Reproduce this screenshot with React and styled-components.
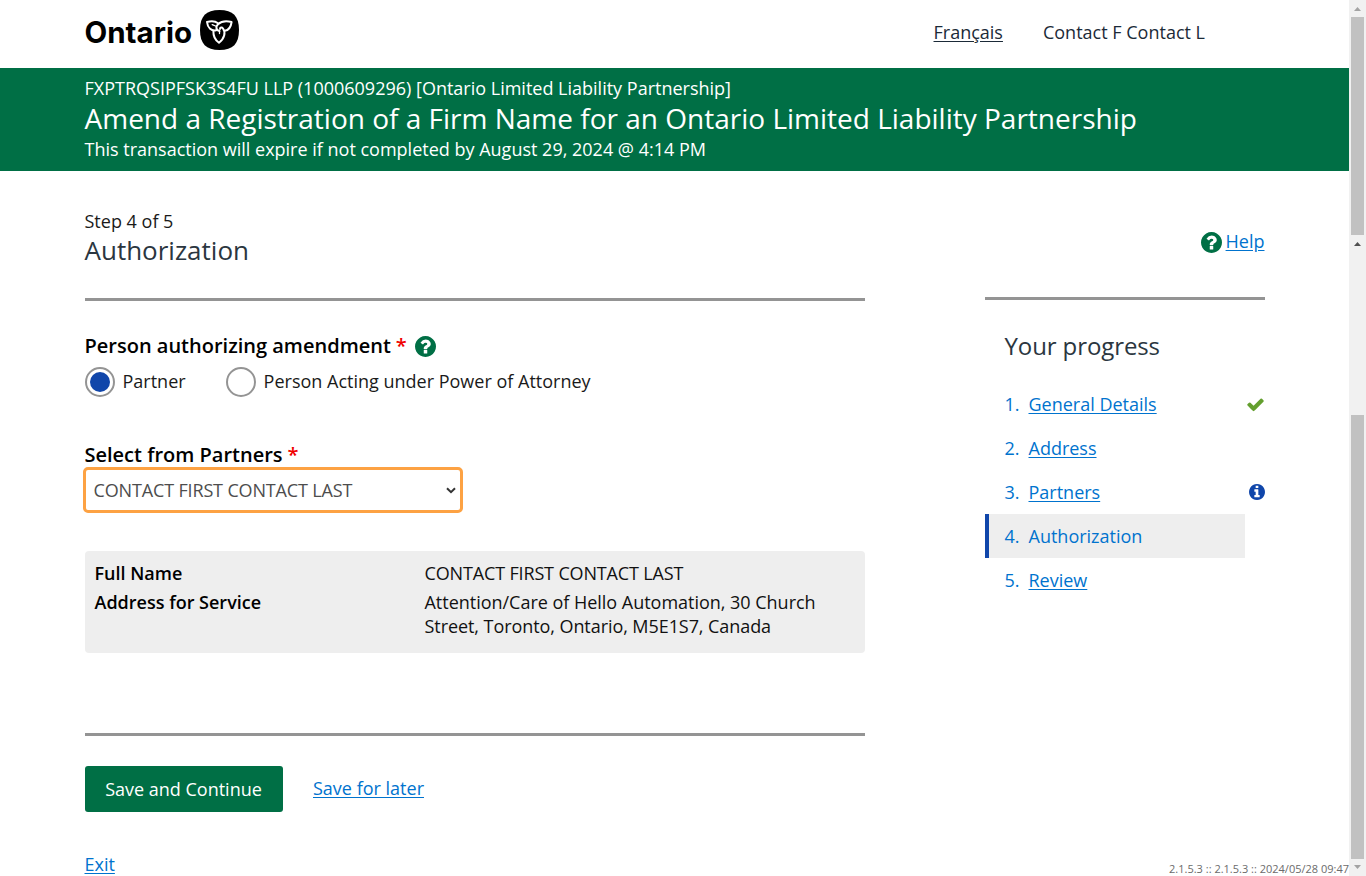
import React from 'react';
import styled, { createGlobalStyle } from 'styled-components';

const GlobalStyle = createGlobalStyle`
  *, *::before, *::after { box-sizing: border-box; }
  body {
    margin: 0;
    overflow: hidden;
    background: #fff;
    color: #1a1a1a;
    font-family: 'Open Sans', 'Noto Sans', sans-serif;
    font-size: 18px;
    line-height: 24px;
  }
  h1, h2, p, ol, dl, dd, dt, fieldset { margin: 0; padding: 0; border: 0; font-weight: 400; }
`;

const Shell = styled.div`
  display: flex;
  width: 1366px;
  height: 876px;
  overflow: hidden;
`;

const Page = styled.div`
  position: relative;
  flex: 1;
  min-width: 0;
`;

const Header = styled.header`
  display: flex;
  align-items: flex-start;
  justify-content: space-between;
  height: 68px;
  padding: 0 144px 0 84.5px;
`;

const Brand = styled.div`
  display: flex;
  align-items: center;
  gap: 7px;
  padding-top: 10px;
  color: #000;
  svg { display: block; }
`;

const BrandName = styled.span`
  width: 108px;
  padding-top: 4px;
  font: 700 29.5px/36px Inter, sans-serif;
  white-space: nowrap;
`;

const HeaderLinks = styled.nav`
  display: flex;
  gap: 40px;
  padding-top: 20px;
  color: #1b2a38;
  a { color: inherit; text-underline-offset: 2px; }
`;

const Banner = styled.section`
  height: 103px;
  padding: 8px 84.5px 0;
  background: #006f45;
  color: #fff;
  white-space: nowrap;
  p { line-height: 24px; font-size: 18px; }
`;

const BannerTitle = styled.h1`
  font-size: 28px;
  line-height: 37px;
`;

const Columns = styled.div`
  display: flex;
  gap: 120px;
  padding-left: 84.5px;
`;

const Main = styled.main`
  width: 780px;
  padding-top: 38px;
`;

const Rule = styled.div`
  height: 3px;
  background: #949494;
`;

const StepHeading = styled.div`
  height: 89px;
  h2 { font-size: 26px; line-height: 34px; color: #2b3640; }
`;

const Label = styled.div`
  display: flex;
  align-items: center;
  height: 28px;
  font-size: 20px;
  font-weight: 600;
  color: #000;
  svg { margin-left: 8px; }
`;

const Required = styled.span`
  margin-left: 5px;
  color: #f00000;
`;

const RadioField = styled.fieldset`
  margin-top: 31px;
`;

const RadioRow = styled.div`
  display: flex;
  gap: 40px;
  margin-top: 7px;
`;

const Radio = styled.label`
  display: flex;
  align-items: flex-start;
  gap: 8px;
  height: 30px;
`;

const RadioText = styled.span`
  padding-top: 2px;
`;

const RadioMark = styled.span`
  display: grid;
  place-items: center;
  width: 30px;
  height: 30px;
  border: 2px solid #949494;
  border-radius: 50%;
  &::after {
    content: '';
    width: 20px;
    height: 20px;
    border-radius: 50%;
    background: ${({ $checked }) => ($checked ? '#1046aa' : 'transparent')};
  }
`;

const SelectField = styled.div`
  margin-top: 44px;
`;

const SelectBox = styled.div`
  display: flex;
  align-items: center;
  justify-content: space-between;
  width: 380px;
  height: 46px;
  margin: -2px 0 0 -2px;
  padding: 0 4px 0 8px;
  border: 3px solid #fda243;
  border-radius: 5px;
  color: #4d4d4d;
`;

const Upper = styled.span`
  letter-spacing: -0.15px;
`;

const Summary = styled.dl`
  display: grid;
  grid-template-columns: 330px 410px;
  align-content: start;
  row-gap: 5px;
  height: 102px;
  margin-top: 38px;
  padding: 10px;
  border-radius: 4px;
  background: #eee;
  color: #111;
  dt { font-weight: 600; color: #000; }
`;

const AddressLine = styled.span`
  display: block;
  letter-spacing: ${({ $spacing }) => $spacing}px;
`;

const FooterRule = styled(Rule)`
  margin-top: 80px;
`;

const Actions = styled.div`
  display: flex;
  align-items: flex-start;
  gap: 30.5px;
  margin-top: 30px;
  a { margin-top: 10px; }
`;

const PrimaryButton = styled.button`
  width: 198px;
  height: 46px;
  padding: 0;
  border: 0;
  border-radius: 3px;
  background: #006f45;
  color: #fff;
  font: inherit;
`;

const Link = styled.a`
  color: #0073ce;
  text-decoration: ${({ $plain }) => ($plain ? 'none' : 'underline')};
  text-underline-offset: 2px;
`;

const ExitRow = styled.div`
  margin-top: 40px;
`;

const Aside = styled.aside`
  width: 280px;
  padding-top: 58px;
`;

const Help = styled.div`
  display: flex;
  align-items: flex-start;
  justify-content: flex-end;
  gap: 4px;
  height: 24px;
  margin-bottom: 44px;
  svg { margin-top: 3px; }
`;

const ProgressTitle = styled.h2`
  margin: 30px 0 20px;
  padding-left: 20px;
  font-size: 24px;
  line-height: 32px;
  color: #2b3640;
  letter-spacing: -0.1px;
`;

const Steps = styled.ol`
  list-style: none;
`;

const Step = styled.li`
  display: flex;
  align-items: center;
  height: 44px;
  width: ${({ $current }) => ($current ? '260px' : '280px')};
  padding-left: ${({ $current }) => ($current ? '16px' : '20px')};
  border-left: ${({ $current }) => ($current ? '4px solid #1046aa' : '0')};
  background: ${({ $current }) => ($current ? '#eee' : 'none')};
  color: #0073ce;
  svg { margin-left: auto; }
`;

const StepNumber = styled.span`
  width: 24px;
`;

const Version = styled.div`
  position: absolute;
  right: 0;
  bottom: 0;
  font-size: 11px;
  line-height: 15px;
  color: #6b6b6b;
`;

const Scrollbar = styled.div`
  display: flex;
  flex-direction: column;
  width: 17px;
  background: #f1f1f1;
`;

const Arrow = styled.svg`
  display: block;
  width: 17px;
  height: 17px;
  fill: ${({ $dim }) => ($dim ? '#a3a3a3' : '#505050')};
`;

const Track = styled.div`
  height: ${({ $height }) => $height}px;
  padding: 0 2px;
  padding-top: ${({ $offset }) => $offset}px;
`;

const Thumb = styled.div`
  height: 100%;
  background: #c1c1c1;
`;

const Trillium = () => (
  <svg width="39" height="40" viewBox="0 0 39 40">
    <path fill="#000" d="M19.5 0C33 0 39 6.300 39 20s-6 20-19.500 20S0 33.700 0 20 6 0 19.500 0Z" />
    <g fill="none" stroke="#fff" strokeWidth="2" strokeLinejoin="round" strokeLinecap="round">
      <path d="M19.500 21C15.800 20.300 15.500 16.500 18 14.200C21.500 11 26 10.600 31.600 12C30.900 17 28.500 20.300 24.800 20.700" />
      <path d="M16.200 20.300C11.500 21.300 7.600 18 7 12C12 10.800 15.500 11.300 18 13.200" />
      <path d="M13.400 21.300C13.200 26.300 15 30 19 32.800C24.500 28.700 25.900 22.500 23 18.500C21.900 17 20 17.400 20 19" />
      <path d="M12.200 14.600L15.500 16M19.500 21V23.500" strokeWidth="1.300" />
    </g>
  </svg>
);

const DISC = 'q0 209-103 385.500t-279.500 279.500-385.500 103-385.500-103-279.500-279.500-103-385.500 103-385.500 279.500-279.500 385.500-103 385.500 103 279.500 279.500 103 385.500z';

const QuestionIcon = () => (
  <svg width="21" height="21" viewBox="128 128 1536 1536" fill="#006f45">
    <path d={`M1024 1376v-192q0-14-9-23t-23-9h-192q-14 0-23 9t-9 23v192q0 14 9 23t23 9h192q14 0 23-9t9-23zm256-672q0-88-55.500-163t-138.500-116-170-41q-243 0-371 213-15 24 8 42l132 100q7 6 19 6 16 0 25-12 53-68 86-92 34-24 86-24 48 0 85.500 26t37.500 59q0 38-20 61t-68 45q-63 28-115.500 86.500t-52.500 125.500v36q0 14 9 23t23 9h192q14 0 23-9t9-23q0-19 21.500-49.500t54.500-49.500q32-18 49-28.500t46-35 44.500-48 28-60.500 12.500-81zM1664 896${DISC}`} />
  </svg>
);

const InfoIcon = () => (
  <svg width="16" height="16" viewBox="128 128 1536 1536" fill="#1046aa">
    <path d={`M1152 1376v-160q0-14-9-23t-23-9h-96v-512q0-14-9-23t-23-9h-320q-14 0-23 9t-9 23v160q0 14 9 23t23 9h96v320h-96q-14 0-23 9t-9 23v160q0 14 9 23t23 9h448q14 0 23-9t9-23zm-128-896v-160q0-14-9-23t-23-9h-192q-14 0-23 9t-9 23v160q0 14 9 23t23 9h192q14 0 23-9t9-23zM1664 896${DISC}`} />
  </svg>
);

const CheckIcon = () => (
  <svg width="19" height="19" viewBox="0 0 1792 1792" fill="#639f2e">
    <path d="M1671 566q0 40-28 68l-724 724-136 136q-28 28-68 28t-68-28l-136-136-362-362q-28-28-28-68t28-68l136-136q28-28 68-28t68 28l294 295 656-657q28-28 68-28t68 28l136 136q28 28 28 68z" />
  </svg>
);

const steps = [
  { name: 'General Details', icon: <CheckIcon /> },
  { name: 'Address' },
  { name: 'Partners', icon: <InfoIcon /> },
  { name: 'Authorization', current: true },
  { name: 'Review' },
];

export default function App() {
  return (
    <>
      <GlobalStyle />
      <Shell>
        <Page>
          <Header>
            <Brand><BrandName>Ontario</BrandName><Trillium /></Brand>
            <HeaderLinks><a href="#fr">Français</a><span>Contact F Contact L</span></HeaderLinks>
          </Header>
          <Banner>
            <p>FXPTRQSIPFSK3S4FU LLP (1000609296) [Ontario Limited Liability Partnership]</p>
            <BannerTitle>Amend a Registration of a Firm Name for an Ontario Limited Liability Partnership</BannerTitle>
            <p>This transaction will expire if not completed by August 29, 2024 @ 4:14 PM</p>
          </Banner>
          <Columns>
            <Main>
              <StepHeading><p>Step 4 of 5</p><h2>Authorization</h2></StepHeading>
              <Rule />
              <RadioField>
                <Label>Person authorizing amendment<Required>*</Required><QuestionIcon /></Label>
                <RadioRow>
                  <Radio><RadioMark $checked /><RadioText>Partner</RadioText></Radio>
                  <Radio><RadioMark /><RadioText>Person Acting under Power of Attorney</RadioText></Radio>
                </RadioRow>
              </RadioField>
              <SelectField>
                <Label>Select from Partners<Required>*</Required></Label>
                <SelectBox>
                  <Upper>CONTACT FIRST CONTACT LAST</Upper>
                  <svg width="10" height="7" viewBox="0 0 10 7"><path d="M1 1.200 5 5.200 9 1.200" fill="none" stroke="#333" strokeWidth="2" /></svg>
                </SelectBox>
              </SelectField>
              <Summary>
                <dt>Full Name</dt><dd><Upper>CONTACT FIRST CONTACT LAST</Upper></dd>
                <dt>Address for Service</dt>
                <dd>
                  <AddressLine $spacing={-0.02}>Attention/Care of Hello Automation, 30 Church</AddressLine>
                  <AddressLine $spacing={-0.07}>Street, Toronto, Ontario, M5E1S7, Canada</AddressLine>
                </dd>
              </Summary>
              <FooterRule />
              <Actions><PrimaryButton>Save and Continue</PrimaryButton><Link href="#later">Save for later</Link></Actions>
              <ExitRow><Link href="#exit">Exit</Link></ExitRow>
            </Main>
            <Aside>
              <Help><QuestionIcon /><Link href="#help">Help</Link></Help>
              <Rule />
              <ProgressTitle>Your progress</ProgressTitle>
              <Steps>
                {steps.map((step, i) => (
                  <Step key={step.name} $current={step.current}>
                    <StepNumber>{i + 1}.</StepNumber>
                    <Link $plain={step.current} href="#step">{step.name}</Link>
                    {step.icon}
                  </Step>
                ))}
              </Steps>
            </Aside>
          </Columns>
          <Version>2.1.5.3 :: 2.1.5.3 :: 2024/05/28 09:47</Version>
        </Page>
        <Scrollbar>
          <Arrow $dim viewBox="0 0 17 17"><path d="M5 11h7L8.500 7z" /></Arrow>
          <Track $height={218} $offset={0}><Thumb /></Track>
          <Arrow viewBox="0 0 17 17"><path d="M5 11h7L8.500 7z" /></Arrow>
          <Track $height={607} $offset={163}><Thumb /></Track>
          <Arrow $dim viewBox="0 0 17 17"><path d="M5 6h7L8.500 10z" /></Arrow>
        </Scrollbar>
      </Shell>
    </>
  );
}
